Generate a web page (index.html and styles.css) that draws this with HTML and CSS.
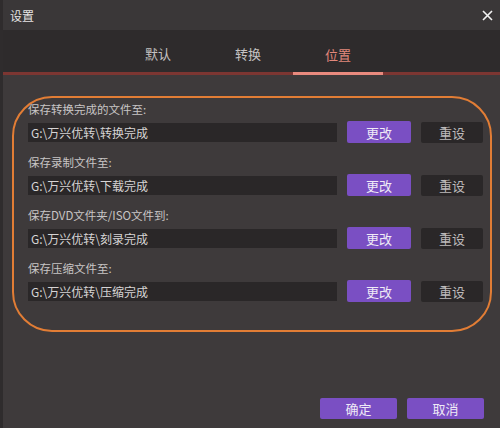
FILE: index.html
```html
<!DOCTYPE html>
<html lang="zh-CN">
  <head>
    <meta charset="UTF-8" />
    <title>设置</title>
    <link rel="stylesheet" href="styles.css">
  </head>
  <body>
    <div class="window">
      <!-- Title bar -->
      <div class="titlebar">
        <span class="title">设置</span>
        <span class="close">
          <svg width="11" height="11" viewBox="0 0 11 11">
            <path d="M1 1 L10 10 M10 1 L1 10" stroke="#f2f2f2" stroke-width="1.6" fill="none" />
          </svg>
        </span>
      </div>

      <!-- Tabs -->
      <div class="tabs">
        <div class="tab">默认</div>
        <div class="tab">转换</div>
        <div class="tab active">位置</div>
      </div>

      <!-- Folder settings -->
      <div class="panel">
        <div class="row">
          <div class="label">保存转换完成的文件至:</div>
          <div class="controls">
            <div class="path">G:\万兴优转\转换完成</div>
            <button class="btn change">更改</button>
            <button class="btn reset">重设</button>
          </div>
        </div>
        <div class="row">
          <div class="label">保存录制文件至:</div>
          <div class="controls">
            <div class="path">G:\万兴优转\下载完成</div>
            <button class="btn change">更改</button>
            <button class="btn reset">重设</button>
          </div>
        </div>
        <div class="row">
          <div class="label">保存DVD文件夹/ISO文件到:</div>
          <div class="controls">
            <div class="path">G:\万兴优转\刻录完成</div>
            <button class="btn change">更改</button>
            <button class="btn reset">重设</button>
          </div>
        </div>
        <div class="row">
          <div class="label">保存压缩文件至:</div>
          <div class="controls">
            <div class="path">G:\万兴优转\压缩完成</div>
            <button class="btn change">更改</button>
            <button class="btn reset">重设</button>
          </div>
        </div>
      </div>

      <!-- Dialog buttons -->
      <div class="footer">
        <button class="btn primary">确定</button>
        <button class="btn primary">取消</button>
      </div>
    </div>
  </body>
</html>
```

FILE: styles.css
```css
/* General Styles */
body {
  margin: 0;
  padding: 0;
  background-color: #3e3a3b;
  font-family: "Noto Sans CJK SC", "Noto Sans", sans-serif;
  color: #d0cdcd;
  overflow: hidden;
}

.window {
  width: 500px;
  height: 428px;
  display: flex;
  flex-direction: column;
  box-sizing: border-box;
  border-left: 3px solid #2f2c2d;
}

/* Title bar */
.titlebar {
  height: 30px;
  display: flex;
  align-items: center;
  justify-content: space-between;
  padding: 0 7px 0 7px;
  background-color: #3a3738;
}

.title {
  font-size: 12px;
  color: #e6e4e4;
}

.close {
  display: flex;
  margin-top: 1px;
}

/* Tabs */
.tabs {
  height: 42px;
  display: flex;
  justify-content: center;
  padding-right: 7px;
  background-color: #2e2b2c;
  border-bottom: 3px solid #7c3632;
}

.tab {
  width: 90px;
  display: flex;
  align-items: center;
  justify-content: center;
  padding-top: 4px;
  font-size: 13px;
  color: #c4c1c1;
  box-sizing: border-box;
}

.tab.active {
  color: #e2887c;
  border-bottom: 3px solid #e98a7e;
  margin-bottom: -3px;
  padding-top: 7px;
}

/* Panel with the folder rows */
.panel {
  margin: 21px 8px 0 9px;
  height: 236px;
  box-sizing: border-box;
  border: 2px solid #e27d35;
  border-radius: 40px;
  padding: 3px 7px 0 14px;
  display: flex;
  flex-direction: column;
  gap: 11px;
}

.label {
  font-size: 11.5px;
  line-height: 16px;
  height: 16px;
  color: #c8c5c5;
  margin-bottom: 4px;
}

.controls {
  display: flex;
  align-items: center;
  gap: 10px;
  height: 22px;
}

.path {
  flex: 1;
  height: 19px;
  line-height: 19px;
  padding-left: 3px;
  font-size: 12px;
  color: #d6d4d4;
  background-color: #2a2728;
}

.btn {
  border: none;
  border-radius: 2px;
  font-family: "Noto Sans CJK SC", "Noto Sans", sans-serif;
  font-size: 13px;
  padding: 0;
  cursor: pointer;
}

.change {
  width: 64px;
  height: 22px;
  background-color: #7a4fc3;
  color: #efeaf6;
}

.reset {
  width: 62px;
  height: 21px;
  background-color: #2a2728;
  color: #bdbaba;
}

/* Footer */
.footer {
  margin-top: auto;
  display: flex;
  justify-content: flex-end;
  gap: 10px;
  padding: 0 16px 9px 0;
}

.primary {
  width: 77px;
  height: 21px;
  background-color: #7a4fc3;
  color: #efeaf6;
}
```
